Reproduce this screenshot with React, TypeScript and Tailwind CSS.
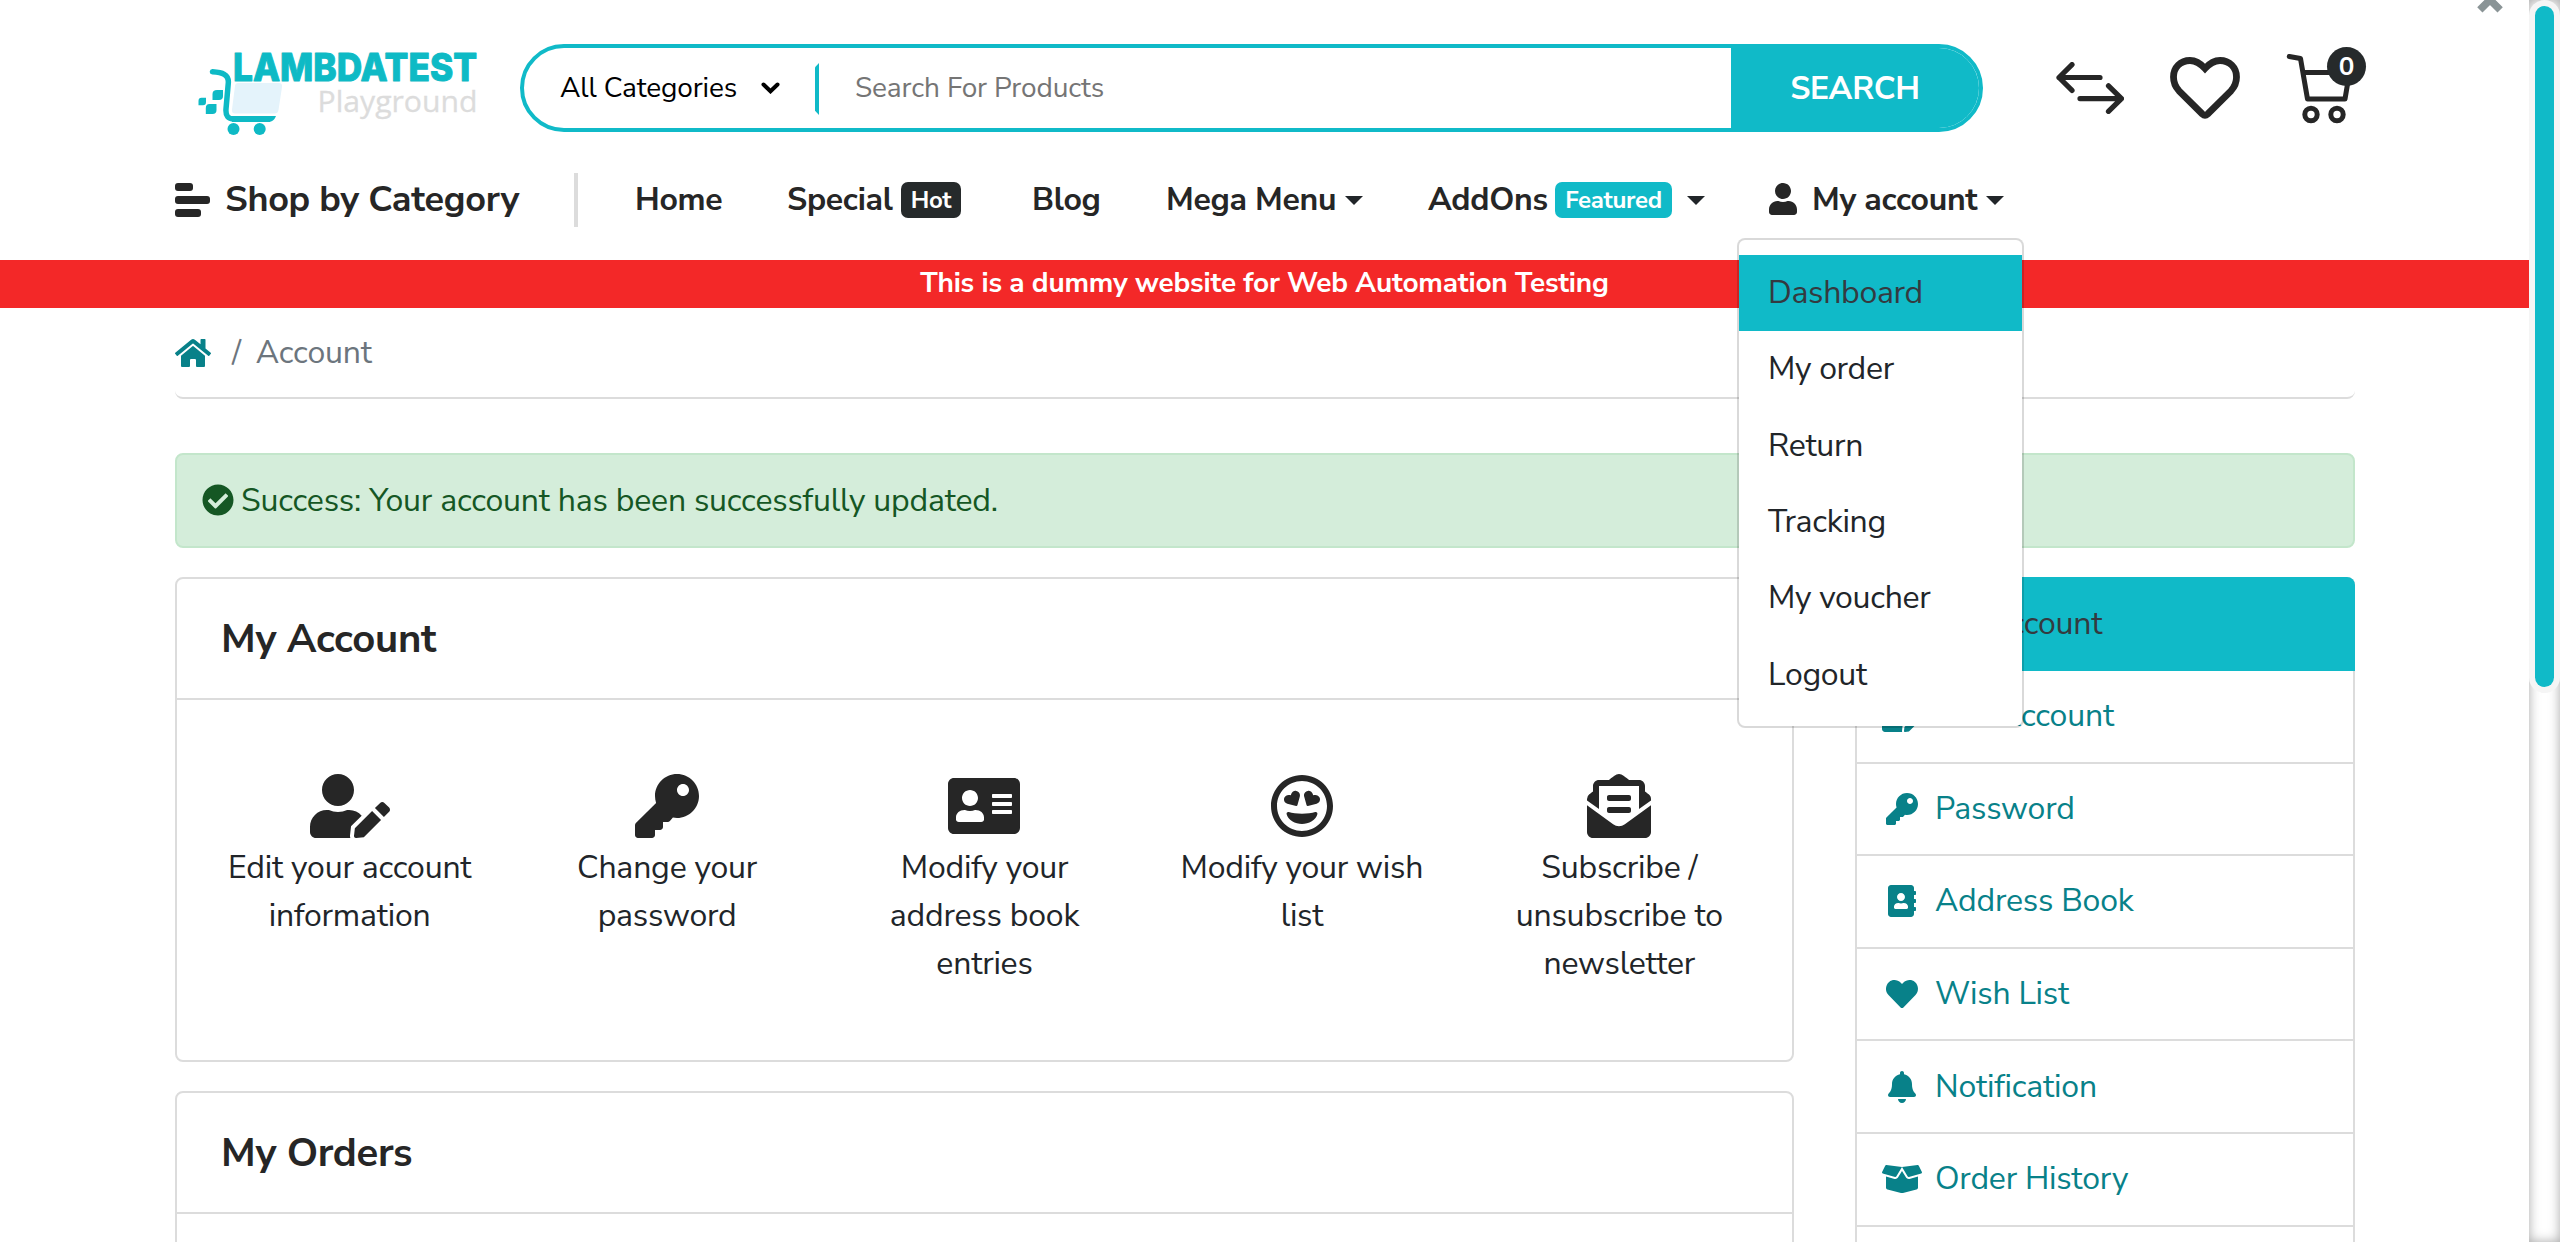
import React from "react";
import type { ReactNode } from "react";
import type { IconType } from "react-icons";
import {
  FaAddressBook,
  FaAddressCard,
  FaBell,
  FaBoxOpen,
  FaCheckCircle,
  FaEnvelopeOpenText,
  FaHeart,
  FaHome,
  FaKey,
  FaRegGrinHearts,
  FaUser,
  FaUserCircle,
  FaUserEdit,
} from "react-icons/fa";

function Logo() {
  return (
    <svg className="ml-[23px] mt-[1px] h-[96px] w-[284px] shrink-0" viewBox="198 45 284 96">
      <path d="M238 83 H279 Q282.500 83 282 87 L278.500 110 Q278 113.500 274.500 113.500 H235 Q231.500 113.500 232 109.500 L235 86 Q235.300 83 238 83Z" fill="#e4f3fb" />
      <path d="M212.500 71.800 C222 72.500 229 74 228.300 83 L226 109 C225.500 116 228 119 234 119 H268" fill="none" stroke="#0ebac5" strokeWidth="5.500" strokeLinecap="round" strokeLinejoin="round" />
      <path d="M232 116 H276 C274.500 119.500 272.500 122 268 122 H232Z" fill="#0ebac5" />
      <path d="M217 90 H223 V96 Q223 100 219 100 H212.500 V94 Q212.500 90 217 90Z" fill="#0ebac5" />
      <path d="M201.500 97.800 H206 V102 Q206 105.200 203 105.200 H198.500 V101 Q198.500 97.800 201.500 97.800Z" fill="#0ebac5" />
      <path d="M209.500 104 H216.500 V110 Q216.500 114 212.500 114 H205.800 V108 Q205.800 104 209.500 104Z" fill="#0ebac5" />
      <circle cx="233.500" cy="129" r="6" fill="#0ebac5" />
      <circle cx="259.700" cy="129" r="6" fill="#0ebac5" />
      <text x="233" y="81.300" textLength="244" lengthAdjust="spacingAndGlyphs" className="font-['Inter',sans-serif] text-[38.500px] font-extrabold tracking-normal" fill="#0ebac5" stroke="#0ebac5" strokeWidth="1" strokeLinejoin="round">
        LAMBDATEST
      </text>
      <text x="317.500" y="111.500" textLength="160" lengthAdjust="spacingAndGlyphs" className="font-['Open_Sans',sans-serif] text-[30px] font-normal tracking-normal" fill="#dcdcdc" stroke="#dcdcdc" strokeWidth="0.300">
        Playground
      </text>
    </svg>
  );
}

function SearchBar() {
  return (
    <div className="ml-[38px] flex h-[88px] w-[1463px] shrink-0 overflow-hidden rounded-full border-4 border-[#10bac8] bg-white tracking-[-0.130px]">
      <div className="flex w-[291px] items-center pl-[36px] text-[28px] text-black">
        <span className="w-[201px]">All Categories</span>
        <svg className="h-[12px] w-[19px]" viewBox="0 0 19 12">
          <path d="M2.500 2.500 L9.500 9.300 L16.500 2.500" fill="none" stroke="#000" strokeWidth="4" strokeLinecap="round" />
        </svg>
      </div>
      <div className="mt-[15px] h-[52px] w-[4px] bg-[#10bac8] [clip-path:polygon(0_8%,100%_0,100%_100%,0_92%)]" />
      <div className="flex flex-1 items-center pl-[36px] text-[28px] text-[#757575]">Search For Products</div>
      <div className="flex w-[248px] items-center justify-center bg-[#10bac8] pt-[2px] text-[32px] font-bold tracking-[-0.2px] text-white">
        SEARCH
      </div>
    </div>
  );
}

function HeaderIcons() {
  const stroke = { fill: "none", stroke: "#262626", strokeLinecap: "round" as const };
  return (
    <div className="flex items-start">
      <svg className="ml-[73px] mt-[18px] h-[52px] w-[68px]" viewBox="2056 62 68 52" {...stroke} strokeWidth="5.200" strokeLinejoin="round">
        <path d="M2100 77.500 H2059 M2072 64.600 L2059 77.500 L2072 90.400" />
        <path d="M2080 98.600 H2121.500 M2108.500 85.800 L2121.500 98.600 L2108.500 111.400" />
      </svg>
      <svg className="ml-[46px] mt-[13px] h-[62px] w-[70px]" viewBox="0 0 70 62" {...stroke} strokeWidth="6.800">
        <path d="M35 11.500 C30 6 25 3.500 20 3.500 C10.500 3.500 3.500 10.500 3.500 20 C3.500 26 5.500 30 9 33.800 L32.300 57 Q35 59.500 37.700 57 L61 33.800 C64.500 30 66.500 26 66.500 20 C66.500 10.500 59.500 3.500 50 3.500 C45 3.500 40 6 35 11.500Z" />
      </svg>
      <div className="relative ml-[46px] mt-[10px] h-[70px] w-[66px]">
        <svg className="h-[70px] w-[66px]" viewBox="2286 54 66 70" {...stroke} strokeWidth="5" strokeLinejoin="round">
          <path d="M2289.300 56.500 L2300.500 58.500 L2307.500 99 H2345 L2349.500 72.500 H2303" />
          <circle cx="2311" cy="114.500" r="6.200" />
          <circle cx="2337" cy="114.500" r="6.200" />
        </svg>
        <span className="absolute left-[41px] top-[-7px] flex size-[39px] items-center justify-center rounded-full bg-[#262a2b] text-[26px] font-bold text-white">0</span>
      </div>
    </div>
  );
}

function Caret({ className }: { className: string }) {
  return <span className={`border-x-[9.600px] border-t-[9.600px] border-x-transparent border-t-[#212529] ${className}`} />;
}

function Badge({ className, children }: { className: string; children: ReactNode }) {
  return (
    <span className={`flex h-[36px] items-center justify-center rounded-[7px] text-[24px] font-bold leading-none text-white ${className}`}>
      {children}
    </span>
  );
}

function NavBar() {
  return (
    <nav className="mt-[8px] flex h-[120px] items-center text-[32px] font-bold tracking-[-0.300px] text-[#262626]">
      <div className="flex w-[35px] flex-col gap-[5.500px]">
        <span className="h-[7.500px] w-[18px] rounded-[3px] bg-[#262626]" />
        <span className="h-[7.500px] w-[35px] rounded-[3px] bg-[#262626]" />
        <span className="h-[7.500px] w-[26px] rounded-[3px] bg-[#262626]" />
      </div>
      <span className="ml-[15px] w-[349px] text-[36px]">Shop by Category</span>
      <span className="h-[54px] w-[4px] bg-[#dcdcdc]" />
      <span className="ml-[57px] w-[152px]">Home</span>
      <span className="flex w-[245px] items-center">
        <span className="w-[114px]">Special</span>
        <Badge className="w-[60px] bg-[#262a2b]">Hot</Badge>
      </span>
      <span className="w-[134px]">Blog</span>
      <span className="flex w-[262px] items-center">
        <span className="w-[179px]">Mega Menu</span>
        <Caret className="" />
      </span>
      <span className="flex w-[341px] items-center">
        <span className="w-[127px]">AddOns</span>
        <Badge className="w-[117px] bg-[#10bac8]">Featured</Badge>
        <Caret className="ml-[15px]" />
      </span>
      <FaUser className="-mt-[2px] size-[32px] w-[28px]" />
      <span className="ml-[15px] w-[174px] whitespace-nowrap">My account</span>
      <Caret className="" />
    </nav>
  );
}

const menuItems = ["Dashboard", "My order", "Return", "Tracking", "My voucher", "Logout"];

function AccountMenu() {
  return (
    <div className="absolute left-[1737px] top-[238px] z-10 h-[490px] w-[287px] rounded-[8px] border-2 border-black/15 bg-white bg-clip-padding pt-[15px] tracking-[-0.300px] text-[#212529]">
      {menuItems.map((item, i) => (
        <div
          key={item}
          className={`flex h-[76.300px] items-center pl-[29px] ${i === 0 ? "bg-[#10bac8] text-[#343a40]" : ""}`}
        >
          {item}
        </div>
      ))}
    </div>
  );
}

function Panel({ title, className, children }: { title: string; className: string; children?: ReactNode }) {
  return (
    <section className={`rounded-[8px] border-2 border-[#dcdcdc] ${className}`}>
      <h2 className="flex h-[121px] items-center border-b-2 border-[#dcdcdc] pl-[44px] text-[40px] font-bold tracking-[-0.300px] text-[#262626]">{title}</h2>
      {children}
    </section>
  );
}

const actions: { icon: IconType; label: string; size: string }[] = [
  { icon: FaUserEdit, label: "Edit your account information", size: "w-[80px]" },
  { icon: FaKey, label: "Change your password", size: "w-[64px]" },
  { icon: FaAddressCard, label: "Modify your address book entries", size: "w-[72px]" },
  { icon: FaRegGrinHearts, label: "Modify your wish list", size: "w-[62px]" },
  { icon: FaEnvelopeOpenText, label: "Subscribe / unsubscribe to newsletter", size: "w-[64px]" },
];

const sideLinks: { icon: IconType; label: string }[] = [
  { icon: FaUserCircle, label: "My Account" },
  { icon: FaUserEdit, label: "Edit Account" },
  { icon: FaKey, label: "Password" },
  { icon: FaAddressBook, label: "Address Book" },
  { icon: FaHeart, label: "Wish List" },
  { icon: FaBell, label: "Notification" },
  { icon: FaBoxOpen, label: "Order History" },
];

function Sidebar() {
  return (
    <aside className="h-[665px] w-[500px] rounded-t-[8px] border-2 border-b-0 border-[#dcdcdc]">
      {sideLinks.map(({ icon: Icon, label }, i) => (
        <div
          key={label}
          className={
            i === 0
              ? "-mx-[2px] -mt-[2px] flex h-[94px] items-center rounded-t-[8px] bg-[#10bac8] pl-[27px] text-[#343a40]"
              : "flex h-[92.600px] items-center border-b-2 border-[#dcdcdc] pl-[25px] text-[#088189]"
          }
        >
          <Icon className="h-[32px] w-[40px]" />
          <span className="ml-[13px]">{label}</span>
        </div>
      ))}
    </aside>
  );
}

function ScrollBar() {
  return (
    <div className="h-[1242px] w-[31px] shrink-0 bg-white shadow-[inset_0_0_12px_rgba(0,0,0,0.35)]">
      <div className="h-[693px] rounded-full bg-[#f5f5f5] px-[6px] py-[6px]">
        <div className="h-full rounded-full bg-[#10bac8]" />
      </div>
    </div>
  );
}

export default function App() {
  return (
    <div className="flex h-[1242px] w-[2560px] overflow-hidden bg-white font-['Nunito_Sans',Nunito,'Open_Sans',sans-serif] text-[32px] font-normal tracking-[-0.200px] text-[#212529]">
      <div className="relative w-[2529px] shrink-0">
        <span className="absolute left-[2475px] top-[-32px] text-[50px] font-black leading-[60px] text-[#8a9496] [-webkit-text-stroke:1.500px_#8a9496]">×</span>
        <header className="pl-[175px] pt-[44px]">
          <div className="flex h-[88px]">
            <Logo />
            <SearchBar />
            <HeaderIcons />
          </div>
          <NavBar />
        </header>
        <AccountMenu />
        <div className="flex h-[48px] items-center justify-center bg-[#f32828] pb-[2px] text-[28px] font-bold tracking-[-0.180px] text-white">
          This is a dummy website for Web Automation Testing
        </div>
        <main className="ml-[175px] w-[2180px]">
          <div className="flex h-[91px] items-center rounded-b-[8px] border-b-2 border-[#dcdcdc] text-[#6c757d]">
            <FaHome className="h-[32px] w-[36px] text-[#088189]" />
            <span className="ml-[21px]">/</span>
            <span className="ml-[15px]">Account</span>
          </div>
          <div className="mt-[54px] flex h-[95px] items-center rounded-[8px] border-2 border-[#c3e6cb] bg-[#d4edda] pl-[25px] text-[#155724]">
            <FaCheckCircle className="-mt-[2px] size-[32px]" />
            <span className="ml-[7px]">Success: Your account has been successfully updated.</span>
          </div>
          <div className="mt-[29px] flex items-start justify-between">
            <div className="w-[1619px]">
              <Panel title="My Account" className="h-[485px]">
                <div className="grid grid-cols-5 px-[14px] pt-[74px] text-center leading-[48px]">
                  {actions.map(({ icon: Icon, label, size }) => (
                    <div key={label} className="flex flex-col items-center px-[30px]">
                      <Icon className={`h-[64px] text-[#262626] ${size}`} />
                      <span className="mt-[6px]">{label}</span>
                    </div>
                  ))}
                </div>
              </Panel>
              <Panel title="My Orders" className="mt-[29px] h-[485px]" />
            </div>
            <Sidebar />
          </div>
        </main>
      </div>
      <ScrollBar />
    </div>
  );
}
